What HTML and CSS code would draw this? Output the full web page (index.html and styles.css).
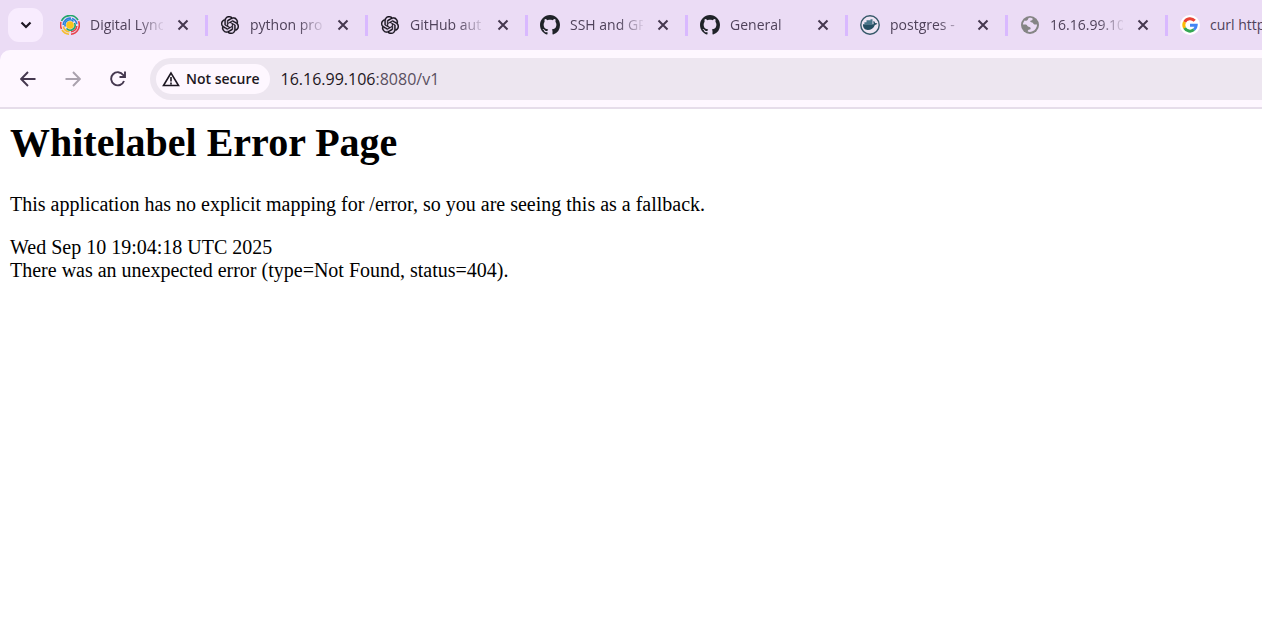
FILE: index.html
```html
<!DOCTYPE html>
<html lang="en">
<head>
<meta charset="utf-8">
<title>Whitelabel Error Page</title>
<link rel="stylesheet" href="styles.css">
</head>
<body>
<svg class="defs" aria-hidden="true">
  <symbol id="close" viewBox="0 0 12 12"><path d="M1.500 1.500l9 9M10.500 1.500l-9 9" fill="none" stroke="#45384f" stroke-width="2"/></symbol>
  <symbol id="openai" viewBox="0 0 24 24"><path d="M22.2819 9.8211a5.9847 5.9847 0 0 0-.5157-4.9108 6.0462 6.0462 0 0 0-6.5098-2.9A6.0651 6.0651 0 0 0 4.9807 4.1818a5.9847 5.9847 0 0 0-3.9977 2.9 6.0462 6.0462 0 0 0 .7427 7.0966 5.98 5.98 0 0 0 .511 4.9107 6.051 6.051 0 0 0 6.5146 2.9001A5.9847 5.9847 0 0 0 13.2599 24a6.0557 6.0557 0 0 0 5.7718-4.2058 5.9894 5.9894 0 0 0 3.9977-2.9001 6.0557 6.0557 0 0 0-.7475-7.0729zm-9.022 12.6081a4.4755 4.4755 0 0 1-2.8764-1.0408l.1419-.0804 4.7783-2.7582a.7948.7948 0 0 0 .3927-.6813v-6.7369l2.02 1.1686a.071.071 0 0 1 .038.052v5.5826a4.504 4.504 0 0 1-4.4945 4.4944zm-9.6607-4.1254a4.4708 4.4708 0 0 1-.5346-3.0137l.142.0852 4.783 2.7582a.7712.7712 0 0 0 .7806 0l5.8428-3.3685v2.3324a.0804.0804 0 0 1-.0332.0615L9.74 19.9502a4.4992 4.4992 0 0 1-6.1408-1.6464zM2.3408 7.8956a4.485 4.485 0 0 1 2.3655-1.9728V11.6a.7664.7664 0 0 0 .3879.6765l5.8144 3.3543-2.0201 1.1685a.0757.0757 0 0 1-.071 0l-4.8303-2.7865A4.504 4.504 0 0 1 2.3408 7.872zm16.5963 3.8558L13.1038 8.364 15.1192 7.2a.0757.0757 0 0 1 .071 0l4.8303 2.7913a4.4944 4.4944 0 0 1-.6765 8.1042v-5.6772a.79.79 0 0 0-.407-.667zm2.0107-3.0231l-.142-.0852-4.7735-2.7818a.7759.7759 0 0 0-.7854 0L9.409 9.2297V6.8974a.0662.0662 0 0 1 .0284-.0615l4.8303-2.7866a4.4992 4.4992 0 0 1 6.6802 4.66zM8.3065 12.863l-2.02-1.1638a.0804.0804 0 0 1-.038-.0567V6.0742a4.4992 4.4992 0 0 1 7.3757-3.4537l-.142.0805L8.704 5.459a.7948.7948 0 0 0-.3927.6813zm1.0976-2.3654l2.602-1.4998 2.6069 1.4998v2.9994l-2.5974 1.4997-2.6067-1.4997Z" fill="#14101a" stroke="#14101a" stroke-width=".4"/></symbol>
  <symbol id="github" viewBox="0 0 16 16"><path fill="#1f2328" d="M8 0C3.58 0 0 3.58 0 8c0 3.54 2.29 6.53 5.47 7.59.4.07.55-.17.55-.38 0-.19-.01-.82-.01-1.490-2.010.37-2.530-.490-2.690-.940-.090-.230-.480-.940-.820-1.130-.280-.150-.680-.520-.010-.530.630-.010 1.080.580 1.230.820.720 1.210 1.870.870 2.330.660.070-.520.280-.870.510-1.070-1.780-.200-3.640-.890-3.640-3.950 0-.870.310-1.590.820-2.150-.080-.200-.360-1.020.080-2.120 0 0 .670-.210 2.200.820.640-.180 1.320-.270 2-.270s1.360.090 2 .270c1.530-1.040 2.200-.820 2.200-.820.440 1.100.160 1.920.080 2.120.510.560.820 1.270.820 2.150 0 3.070-1.870 3.750-3.650 3.950.290.250.540.730.540 1.480 0 1.070-.010 1.930-.010 2.200 0 .210.150.460.550.380A8.013 8.013 0 0 0 16 8c0-4.420-3.580-8-8-8z"/></symbol>
</svg>

<header class="browser">
  <nav class="tabs" aria-label="Tabs">
    <button class="tab-search" aria-label="Search tabs"><svg width="12" height="8" viewBox="0 0 12 8"><path d="M1.500 1.500L6 6l4.500-4.500" fill="none" stroke="#1d1722" stroke-width="2.200"/></svg></button>
    <div class="tab">
      <svg class="favicon" viewBox="0 0 20 20"><g fill="none" stroke-width="1.600"><path d="M1.500 6A9.300 9.300 0 0 1 18 5.200" stroke="#20a66a"/><path d="M18.500 6.200A9.300 9.300 0 0 1 11 19.200" stroke="#e8434b"/><path d="M9 19.200A9.300 9.300 0 0 1 2 15" stroke="#f5bd2d"/><path d="M1.500 14A9.300 9.300 0 0 1 1 7" stroke="#e8434b"/><path d="M3.200 10A6.900 6.900 0 0 1 11 3.200" stroke="#2f80dc"/><path d="M12 3.500A6.900 6.900 0 0 1 16.800 9" stroke="#2f80dc"/><path d="M16.800 11A6.900 6.900 0 0 1 11 16.800" stroke="#e8434b"/><path d="M9.500 16.800A6.900 6.900 0 0 1 3.300 11.500" stroke="#f5bd2d"/><path d="M5.300 11.500A4.900 4.900 0 0 1 13.500 6.500" stroke="#2488d8"/><path d="M14.500 8A4.900 4.900 0 0 1 6.500 13.500" stroke="#25a968"/></g><circle cx="10" cy="10" r="3.800" fill="#f8c51c"/></svg>
      <span class="title">Digital Lync</span><button class="close" aria-label="Close tab"><svg width="12" height="12"><use href="#close"/></svg></button>
    </div>
    <div class="tab"><svg class="favicon small"><use href="#openai"/></svg><span class="title">python pro</span><button class="close" aria-label="Close tab"><svg width="12" height="12"><use href="#close"/></svg></button></div>
    <div class="tab"><svg class="favicon small"><use href="#openai"/></svg><span class="title">GitHub aut</span><button class="close" aria-label="Close tab"><svg width="12" height="12"><use href="#close"/></svg></button></div>
    <div class="tab"><svg class="favicon"><use href="#github"/></svg><span class="title">SSH and GP</span><button class="close" aria-label="Close tab"><svg width="12" height="12"><use href="#close"/></svg></button></div>
    <div class="tab"><svg class="favicon"><use href="#github"/></svg><span class="title">General</span><button class="close" aria-label="Close tab"><svg width="12" height="12"><use href="#close"/></svg></button></div>
    <div class="tab">
      <svg class="favicon" viewBox="0 0 20 20"><circle cx="10" cy="10" r="9.200" fill="#eee4f3" stroke="#365869" stroke-width="1.400"/><path d="M3 9.300h10.500c.2-1 .1-1.700-.3-2.500l.7-.7c.8.600 1.100 1.300 1.200 2.100.8-.2 1.700 0 2.200.4-.5.900-1.300 1.300-2.400 1.300C13.600 13.500 11 14.900 7.800 14.900 4.500 14.900 2.800 12.800 3 9.300z" fill="#244e62"/><path d="M4.400 7.200h8.100v2.200H4.400zM6.500 5.200h4v2h-4zM10.500 4.300h2v3h-2z" fill="#48758a"/></svg>
      <span class="title">postgres -</span><button class="close" aria-label="Close tab"><svg width="12" height="12"><use href="#close"/></svg></button>
    </div>
    <div class="tab">
      <svg class="favicon" viewBox="0 0 20 20"><circle cx="10" cy="10" r="9" fill="#858585"/><path d="M11.500 3c1 .2 1.500.8 1 1.700-.5.800-2 .5-2.300 1.400-.2.900.8 1.300 1.800 1.500 1.300.2 1.200 1.700 2.400 1.900 1 .2 1.900-.2 2.700-.1-.1 2.800-1.700 5.600-4.600 6.900-1.400.6-3.300.8-4.700.3-.1-1.200.3-1.800 1.500-2 1.300-.2 1.600-1 1.200-1.900-.5-1-1.700-.5-2.500-1.200-.9-.8-1-2-2.300-2.100-1-.1-1.800.3-2.800.2.100-1.600.7-3 1.700-4.200.9 0 1.500.4 2.300.2 1.400-.3.800-2 2-2.500.8-.3 1.700-.3 2.600-.1z" fill="#ebdcf5"/></svg>
      <span class="title">16.16.99.10</span><button class="close" aria-label="Close tab"><svg width="12" height="12"><use href="#close"/></svg></button>
    </div>
    <div class="tab">
      <svg class="favicon" viewBox="0 0 20 20"><circle cx="10" cy="10" r="10" fill="#fff"/><g fill="none" stroke-width="3"><path d="M14.700 5.700A6.200 6.200 0 0 0 4.600 7" stroke="#ea4335"/><path d="M4.600 7a6.200 6.200 0 0 0 0 6" stroke="#fbbc05"/><path d="M4.600 13a6.200 6.200 0 0 0 9.400 1.700" stroke="#34a853"/><path d="M14 14.700a6.200 6.200 0 0 0 2.200-4.500H10" stroke="#4285f4"/></g></svg>
      <span class="title">curl http</span>
    </div>
  </nav>
  <div class="toolbar">
    <div class="nav-buttons">
      <button aria-label="Back"><svg width="16" height="16" viewBox="0 0 16 16"><path d="M15.500 8H1.500M8 1L1.200 8 8 15" fill="none" stroke="#45384f" stroke-width="1.900"/></svg></button>
      <button aria-label="Forward" disabled><svg width="16" height="16" viewBox="0 0 16 16"><path d="M.5 8h14M8 1l6.800 7L8 15" fill="none" stroke="#aaa2ae" stroke-width="1.900"/></svg></button>
      <button aria-label="Reload"><svg width="16" height="16" viewBox="0 0 16 16"><path d="M14 10A6.600 6.600 0 1 1 13.200 4L15 6M9.500 6H15V.5" fill="none" stroke="#45384f" stroke-width="1.900"/></svg></button>
    </div>
    <div class="address">
      <button class="security"><svg width="18" height="16" viewBox="0 0 18 16"><path d="M9 2L1.500 14.500h15zM9 6v4.500M9 11.500v2" fill="none" stroke="#1d1722" stroke-width="1.600"/></svg>Not secure</button>
      <div class="url" role="textbox" contenteditable="true" aria-label="Address and search bar" spellcheck="false">16.16.99.106<span class="path">:8080/v1</span></div>
    </div>
  </div>
</header>

<main class="page">
  <h1>Whitelabel Error Page</h1>
  <p>This application has no explicit mapping for /error, so you are seeing this as a fallback.</p>
  <div>Wed Sep 10 19:04:18 UTC 2025</div>
  <div>There was an unexpected error (type=Not Found, status=404).</div>
</main>
</body>
</html>
```

FILE: styles.css
```css
* { box-sizing: border-box; }
body {
  margin: 0;
  background: #fff;
  overflow-x: hidden;
}
.defs { display: none; }
button {
  display: flex;
  align-items: center;
  justify-content: center;
  padding: 0;
  border: 0;
  background: none;
  font: inherit;
  color: inherit;
}
.browser {
  background: #ebdcf5;
  font-family: "Open Sans", "Noto Sans", sans-serif;
  font-size: 14px;
  color: #4f425a;
}
.tabs {
  display: flex;
  align-items: center;
  height: 50px;
  padding-left: 8px;
  overflow: hidden;
}
.tab-search {
  flex: none;
  width: 35px;
  height: 34px;
  margin-right: 5px;
  border-radius: 11px;
  background: #f8ecfe;
}
.tab {
  flex: none;
  display: flex;
  align-items: center;
  width: 160px;
  height: 21px;
  padding-left: 12px;
  border-right: 3px solid #d9b9ff;
}
.favicon {
  flex: none;
  width: 20px;
  height: 20px;
}
.favicon.small { padding: 1px; }
.title {
  width: 73px;
  margin-left: 10px;
  overflow: hidden;
  white-space: nowrap;
  line-height: 22px;
  -webkit-mask-image: linear-gradient(to right, #000 48px, transparent 76px);
  mask-image: linear-gradient(to right, #000 48px, transparent 76px);
}
.tab:last-child .title {
  -webkit-mask-image: none;
  mask-image: none;
}
.close { margin-left: 14px; }
.toolbar {
  display: flex;
  align-items: center;
  height: 59px;
  padding-left: 20px;
  border-bottom: 2px solid #e6ddea;
  border-top-left-radius: 10px;
  background: #fef7ff;
}
.nav-buttons {
  display: flex;
  gap: 29px;
  margin-right: 24px;
}
.address {
  flex: 1;
  display: flex;
  align-items: center;
  height: 42px;
  padding-left: 6px;
  border-radius: 21px 0 0 21px;
  background: #ede6f0;
}
.security {
  gap: 6px;
  height: 30px;
  padding: 0 10px 0 6px;
  border-radius: 15px;
  background: #fef7ff;
  font-size: 14px;
  font-weight: 600;
  color: #1d1722;
}
.url {
  flex: 1;
  margin-left: 11px;
  outline: 0;
  font-size: 16px;
  color: #1d1722;
}
.path { color: #5a5060; }
.page {
  padding: 11px 10px;
  font-family: "Liberation Serif", "Times New Roman", serif;
  font-size: 20px;
  line-height: 23px;
  color: #000;
}
h1 {
  margin: 0 0 27px;
  font-size: 40px;
  line-height: 46px;
}
p { margin: 0 0 20px; }
```
